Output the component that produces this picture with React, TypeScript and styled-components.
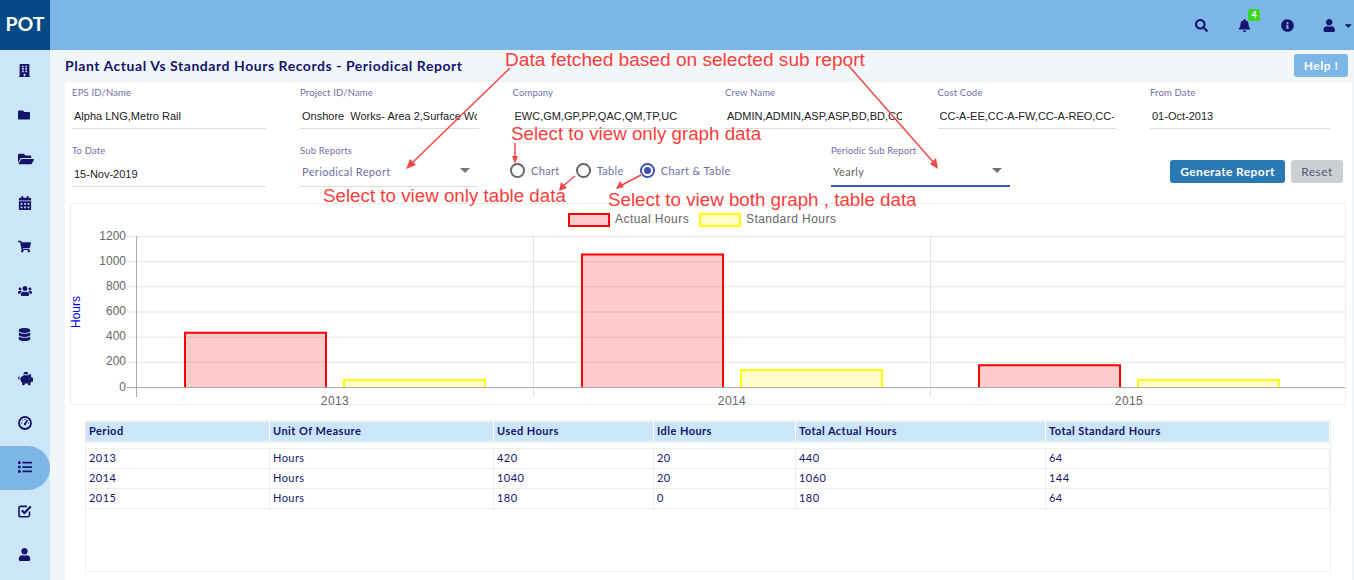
import React from 'react';
import styled, { createGlobalStyle } from 'styled-components';
import {
  FaBell,
  FaBuilding,
  FaCalendarAlt,
  FaCaretDown,
  FaDatabase,
  FaFolder,
  FaFolderOpen,
  FaInfoCircle,
  FaList,
  FaPiggyBank,
  FaSearch,
  FaShoppingCart,
  FaUser,
  FaUsers,
} from 'react-icons/fa';

const NAVY = '#14146b';

const GlobalStyle = createGlobalStyle`
  html, body {
    margin: 0;
    padding: 0;
    height: 580px;
    overflow: hidden;
    background: #f1f6f9;
    font-family: Lato, "Liberation Sans", sans-serif;
  }
  * { box-sizing: border-box; }
`;

const Page = styled.div`
  position: relative;
  width: 1354px;
  height: 580px;
  overflow: hidden;
`;

/* Top bar */
const Header = styled.header`
  display: flex;
  height: 50px;
  background: #7bb6e6;
  align-items: center;
`;

const Logo = styled.div`
  width: 50px;
  height: 50px;
  padding-bottom: 3px;
  background: #034a85;
  color: #fff;
  font-size: 19.5px;
  font-weight: 700;
  display: flex;
  align-items: center;
  justify-content: center;
`;

const HeaderIcons = styled.div`
  margin-left: auto;
  display: flex;
  align-items: center;
  color: ${NAVY};
`;

const HeaderIcon = styled.span`
  position: relative;
  width: 43px;
  display: flex;
  align-items: center;
  justify-content: center;
  font-size: 13px;
`;

const UserMenu = styled.span`
  width: 45px;
  padding-left: 14px;
  display: flex;
  align-items: center;
  gap: 8px;
  font-size: 13px;
`;

const Badge = styled.span`
  position: absolute;
  top: -10px;
  left: 25px;
  width: 12px;
  height: 12px;
  border-radius: 2px;
  background: #3dd625;
  color: #fff;
  font-size: 9px;
  font-weight: 700;
  line-height: 12px;
  text-align: center;
`;

const Body = styled.div`
  display: flex;
  height: 530px;
`;

/* Sidebar */
const Sidebar = styled.nav`
  width: 50px;
  background: #cbe5f9;
  flex: none;
`;

const NavItem = styled.div<{ $active?: boolean; $size: number }>`
  height: 44px;
  display: flex;
  align-items: center;
  padding: 0 0 3px 18px;
  color: ${NAVY};
  font-size: ${(p) => p.$size}px;
  background: ${(p) => (p.$active ? '#7bb6e6' : 'transparent')};
  border-radius: ${(p) => (p.$active ? '0 22px 22px 0' : '0')};
`;

/* Main column */
const Main = styled.main`
  flex: 1;
  padding: 0 2px 0 15px;
  min-width: 0;
`;

const TitleRow = styled.div`
  height: 32px;
  padding: 0 4px 2px 0;
  display: flex;
  align-items: center;
  justify-content: space-between;
`;

const Title = styled.h1`
  margin: 0;
  font-size: 14px;
  font-weight: 700;
  letter-spacing: 0.55px;
  color: ${NAVY};
`;

const HelpButton = styled.button`
  width: 54px;
  height: 23px;
  border: none;
  border-radius: 3px;
  background: #7bb6e6;
  color: #fff;
  font: 700 12px Lato, sans-serif;
  letter-spacing: 0.5px;
`;

const Card = styled.section`
  background: #fff;
  border-radius: 4px 4px 0 0;
  height: 498px;
  padding: 4px 6px 0 5px;
`;

const FieldGrid = styled.div`
  display: grid;
  grid-template-columns: 194px repeat(4, 178.5px) 180px;
  column-gap: 34px;
  padding-left: 2px;
`;

const Field = styled.div`
  height: 43px;
`;

const Label = styled.div`
  font-size: 9.5px;
  letter-spacing: 0.15px;
  color: #6f6fa6;
  height: 13px;
  line-height: 13px;
`;

const Value = styled.div`
  height: 30px;
  padding: 10px 2px 0 2px;
  font: 11px/14px "Liberation Sans", Arial, sans-serif;
  color: #222;
  border-bottom: 1px solid #ddd;
`;

const ValueText = styled.div`
  white-space: pre;
  overflow: hidden;
`;

const SecondRow = styled.div`
  display: flex;
  margin-top: 15px;
  padding-left: 2px;
  height: 59px;
`;

const ToDateField = styled(Field)`
  width: 194px;
  margin-right: 34px;
`;

const SelectField = styled(Field)<{ $w: number }>`
  width: ${(p) => p.$w}px;
  flex: none;
`;

const SelectBox = styled.div<{ $strong?: boolean }>`
  position: relative;
  height: 30px;
  padding: 8px 0 0 2px;
  font-size: 11px;
  letter-spacing: 0.35px;
  line-height: 14px;
  color: ${(p) => (p.$strong ? '#666' : '#6f6fa6')};
  border-bottom: ${(p) => (p.$strong ? '2px solid #3f51b5' : '1px solid #ddd')};
`;

const Caret = styled.span`
  position: absolute;
  right: 8px;
  top: 11px;
  width: 0;
  height: 0;
  border-left: 5px solid transparent;
  border-right: 5px solid transparent;
  border-top: 5px solid #757575;
`;

const RadioGroup = styled.div`
  display: flex;
  width: 321px;
  margin-left: 32px;
  padding: 18px 0 0 0;
  gap: 16px;
  flex: none;
`;

const RadioOption = styled.label`
  display: flex;
  height: 17px;
  gap: 6px;
  align-items: center;
  font-size: 11px;
  letter-spacing: 0.35px;
  color: #6f6fa6;
`;

const RadioCircle = styled.span<{ $on?: boolean }>`
  width: 15px;
  height: 15px;
  border-radius: 50%;
  border: 2px solid ${(p) => (p.$on ? '#3f51b5' : '#666')};
  display: flex;
  align-items: center;
  justify-content: center;
  &::after {
    content: '';
    display: ${(p) => (p.$on ? 'block' : 'none')};
    width: 7px;
    height: 7px;
    border-radius: 50%;
    background: #3f51b5;
  }
`;

const Actions = styled.div`
  display: flex;
  gap: 6px;
  margin-left: 160px;
  padding-top: 16px;
  align-items: flex-start;
`;

const Button = styled.button<{ $primary?: boolean }>`
  height: 23px;
  width: ${(p) => (p.$primary ? '115px' : '52px')};
  border: none;
  border-radius: 3px;
  padding: 0;
  background: ${(p) => (p.$primary ? '#2a79b4' : '#ccd0d5')};
  color: ${(p) => (p.$primary ? '#fff' : '#555a78')};
  font: ${(p) => (p.$primary ? 700 : 400)} 12px Lato, sans-serif;
  letter-spacing: 0.4px;
`;

const ChartBox = styled.div`
  width: 1276px;
  height: 202px;
  border: 1px solid #eee;
`;

const ChartSvg = styled.svg`
  display: block;
  overflow: visible;
  font-family: "Liberation Sans", Arial, sans-serif;
`;

const TableWrap = styled.div`
  margin: 15px 0 0 15px;
  width: 1246px;
  height: 152px;
  border: 1px solid #eee;
  border-top: 2px solid #f0f0f0;
  font-size: 11px;
  letter-spacing: 0.45px;
  color: ${NAVY};
`;

const COLUMNS = '184px 224px 160px 142px 250px 1fr';

const HeadRow = styled.div`
  display: grid;
  grid-template-columns: ${COLUMNS};
  height: 21px;
  background: #cbe5f9;
  font-weight: 700;
  border-bottom: 2px solid #f0f0f0;
  margin-bottom: 5px;
`;

const HeadCell = styled.div`
  padding-left: 3px;
  line-height: 17px;
  border-right: 1px solid #fff;
`;

const BodyRow = styled.div`
  display: grid;
  grid-template-columns: ${COLUMNS};
  height: 20px;
  border-top: 1px solid #eee;
  &:last-child { border-bottom: 1px solid #eee; height: 21px; }
`;

const BodyCell = styled.div`
  padding-left: 3px;
  line-height: 17px;
  border-right: 1px solid #eee;
`;

/* Red notes drawn over the screenshot */
const Note = styled.div<{ $x: number; $y: number; $size?: number }>`
  position: absolute;
  left: ${(p) => p.$x}px;
  top: ${(p) => p.$y}px;
  font: ${(p) => p.$size ?? 18.75}px/22px "Liberation Sans", Arial, sans-serif;
  color: #f93d3d;
  white-space: nowrap;
`;

const ArrowLayer = styled.svg`
  position: absolute;
  left: 0;
  top: 0;
  pointer-events: none;
`;

function GaugeIcon() {
  return (
    <svg width="14" height="14" viewBox="0 0 14 14" fill="none" stroke="currentColor">
      <circle cx="7" cy="7" r="6" strokeWidth="1.8" />
      <path d="M7 8 L9.5 4" strokeWidth="1.5" />
      <circle cx="7" cy="8" r="1.2" fill="currentColor" stroke="none" />
      <path d="M3 7h1.2M9.8 7H11M7 3v1.2M4.2 4.2l.8.8" strokeWidth="1" />
    </svg>
  );
}

function CheckBoxIcon() {
  return (
    <svg width="14" height="14" viewBox="0 0 14 14" fill="none" stroke="currentColor">
      <path d="M11.5 7.5V11a1.8 1.8 0 0 1-1.8 1.8H2.8A1.8 1.8 0 0 1 1 11V4.2a1.8 1.8 0 0 1 1.8-1.8H9" strokeWidth="1.6" />
      <path d="M3.8 6.4 L6.4 9 L12.8 2.4" strokeWidth="2.2" />
    </svg>
  );
}

const navIcons: { Icon: React.ComponentType; size: number }[] = [
  { Icon: FaBuilding, size: 13 },
  { Icon: FaFolder, size: 12 },
  { Icon: FaFolderOpen, size: 16 },
  { Icon: FaCalendarAlt, size: 14 },
  { Icon: FaShoppingCart, size: 13 },
  { Icon: FaUsers, size: 14 },
  { Icon: FaDatabase, size: 13 },
  { Icon: FaPiggyBank, size: 15 },
  { Icon: GaugeIcon, size: 14 },
  { Icon: FaList, size: 14 },
  { Icon: CheckBoxIcon, size: 14 },
  { Icon: FaUser, size: 13 },
];

const fields = [
  ['EPS ID/Name', 'Alpha LNG,Metro Rail'],
  ['Project ID/Name', 'Onshore  Works- Area 2,Surface Works'],
  ['Company', 'EWC,GM,GP,PP,QAC,QM,TP,UC'],
  ['Crew Name', 'ADMIN,ADMIN,ASP,ASP,BD,BD,CC,CC'],
  ['Cost Code', 'CC-A-EE,CC-A-FW,CC-A-REO,CC-A-SF'],
  ['From Date', '01-Oct-2013'],
];

const headers = ['Period', 'Unit Of Measure', 'Used Hours', 'Idle Hours', 'Total Actual Hours', 'Total Standard Hours'];

const rows = [
  ['2013', 'Hours', '420', '20', '440', '64'],
  ['2014', 'Hours', '1040', '20', '1060', '144'],
  ['2015', 'Hours', '180', '0', '180', '64'],
];

// chart coordinates are relative to the box's inner corner (71, 204)
const Y0 = 183;
const yFor = (v: number) => Y0 - (v / 1200) * 151;
const bars = [
  { x: 114, actual: 440, std: 64, stdX: 273, label: '2013', labelX: 264 },
  { x: 511, actual: 1060, std: 144, stdX: 670, label: '2014', labelX: 661 },
  { x: 908, actual: 180, std: 64, stdX: 1067, label: '2015', labelX: 1058 },
];

function Bar({ x, value, fill, stroke }: { x: number; value: number; fill: string; stroke: string }) {
  const top = yFor(value) + 1;
  return (
    <g>
      <rect x={x} y={top} width={141} height={Y0 - top} fill={fill} />
      <path d={`M${x} ${Y0}V${top}H${x + 141}V${Y0}`} fill="none" stroke={stroke} strokeWidth={2} />
    </g>
  );
}

function Chart() {
  return (
    <ChartSvg width={1274} height={200}>
      <rect x={498} y={10} width={40} height={12} fill="#ffcccc" stroke="#f00" strokeWidth={2} />
      <text x={544} y={19} fontSize={12} letterSpacing={0.45} fill="#666">Actual Hours</text>
      <rect x={629} y={10} width={40} height={12} fill="#ffffcc" stroke="#ff0" strokeWidth={2} />
      <text x={675} y={19} fontSize={12} letterSpacing={0.45} fill="#666">Standard Hours</text>

      {[200, 400, 600, 800, 1000, 1200].map((v) => (
        <line key={v} x1={56} x2={1274} y1={yFor(v) + 0.5} y2={yFor(v) + 0.5} stroke="#e2e2e2" />
      ))}
      {[65, 462, 859].map((x, i) => (
        <line key={x} x1={x + 0.5} x2={x + 0.5} y1={32} y2={193} stroke={i === 0 ? '#aaa' : '#e2e2e2'} />
      ))}
      {bars.map((b) => (
        <g key={b.label}>
          <Bar x={b.x} value={b.actual} fill="rgba(255,0,0,0.2)" stroke="#f00" />
          <Bar x={b.stdX} value={b.std} fill="rgba(255,255,0,0.2)" stroke="#ff0" />
          <text x={b.labelX} y={201} fontSize={12} letterSpacing={0.4} fill="#666" textAnchor="middle">{b.label}</text>
        </g>
      ))}
      <line x1={56} x2={1274} y1={Y0 + 0.5} y2={Y0 + 0.5} stroke="#aaa" />
      {[0, 200, 400, 600, 800, 1000, 1200].map((v) => (
        <text key={v} x={55} y={yFor(v) + 3.5} fontSize={12} fill="#666" textAnchor="end">{v}</text>
      ))}
      <text transform="translate(9 108) rotate(-90)" fontSize={12} fill="#0000e6" textAnchor="middle">
        Hours
      </text>
    </ChartSvg>
  );
}

function Arrow({ d, tip }: { d: string; tip: string }) {
  return (
    <g>
      <path d={d} stroke="#f04848" strokeWidth={1.5} fill="none" />
      <polygon points={tip} fill="#f04848" />
    </g>
  );
}

export default function App() {
  return (
    <Page>
      <GlobalStyle />
      <Header>
        <Logo>POT</Logo>
        <HeaderIcons>
          <HeaderIcon><FaSearch /></HeaderIcon>
          <HeaderIcon><FaBell /><Badge>4</Badge></HeaderIcon>
          <HeaderIcon><FaInfoCircle /></HeaderIcon>
          <UserMenu><FaUser /><FaCaretDown size={11} /></UserMenu>
        </HeaderIcons>
      </Header>
      <Body>
        <Sidebar>
          {navIcons.map(({ Icon, size }, i) => (
            <NavItem key={i} $size={size} $active={i === 9}><Icon /></NavItem>
          ))}
        </Sidebar>
        <Main>
          <TitleRow>
            <Title>Plant Actual Vs Standard Hours Records - Periodical Report</Title>
            <HelpButton>Help !</HelpButton>
          </TitleRow>
          <Card>
            <FieldGrid>
              {fields.map(([label, value]) => (
                <Field key={label}>
                  <Label>{label}</Label>
                  <Value><ValueText>{value}</ValueText></Value>
                </Field>
              ))}
            </FieldGrid>
            <SecondRow>
              <ToDateField>
                <Label>To Date</Label>
                <Value><ValueText>15-Nov-2019</ValueText></Value>
              </ToDateField>
              <SelectField $w={178}>
                <Label>Sub Reports</Label>
                <SelectBox>Periodical Report<Caret /></SelectBox>
              </SelectField>
              <RadioGroup>
                <RadioOption><RadioCircle />Chart</RadioOption>
                <RadioOption><RadioCircle />Table</RadioOption>
                <RadioOption><RadioCircle $on />Chart &amp; Table</RadioOption>
              </RadioGroup>
              <SelectField $w={179}>
                <Label>Periodic Sub Report</Label>
                <SelectBox $strong>Yearly<Caret /></SelectBox>
              </SelectField>
              <Actions>
                <Button $primary>Generate Report</Button>
                <Button>Reset</Button>
              </Actions>
            </SecondRow>
            <ChartBox><Chart /></ChartBox>
            <TableWrap>
              <HeadRow>
                {headers.map((h) => <HeadCell key={h}>{h}</HeadCell>)}
              </HeadRow>
              {rows.map((r) => (
                <BodyRow key={r[0]}>
                  {r.map((c, i) => <BodyCell key={i}>{c}</BodyCell>)}
                </BodyRow>
              ))}
            </TableWrap>
          </Card>
        </Main>
      </Body>

      <Note $x={505} $y={49} $size={19.1}>Data fetched based on selected sub report</Note>
      <Note $x={511} $y={123}>Select to view only graph data</Note>
      <Note $x={323} $y={185}>Select to view only table data</Note>
      <Note $x={608} $y={189}>Select to view both graph , table data</Note>
      <ArrowLayer width={1354} height={580}>
        <Arrow d="M510 68 L411 164" tip="406,169 410,159 416,165" />
        <Arrow d="M848 65 L934 163" tip="938,169 930,164 936,158" />
        <Arrow d="M515 143 L515 157" tip="515,164 512,156 518,156" />
        <Arrow d="M575 176 L563 186" tip="559,191 561,182 567,188" />
        <Arrow d="M641 175 L622 185" tip="616,189 620,181 624,187" />
      </ArrowLayer>
    </Page>
  );
}
